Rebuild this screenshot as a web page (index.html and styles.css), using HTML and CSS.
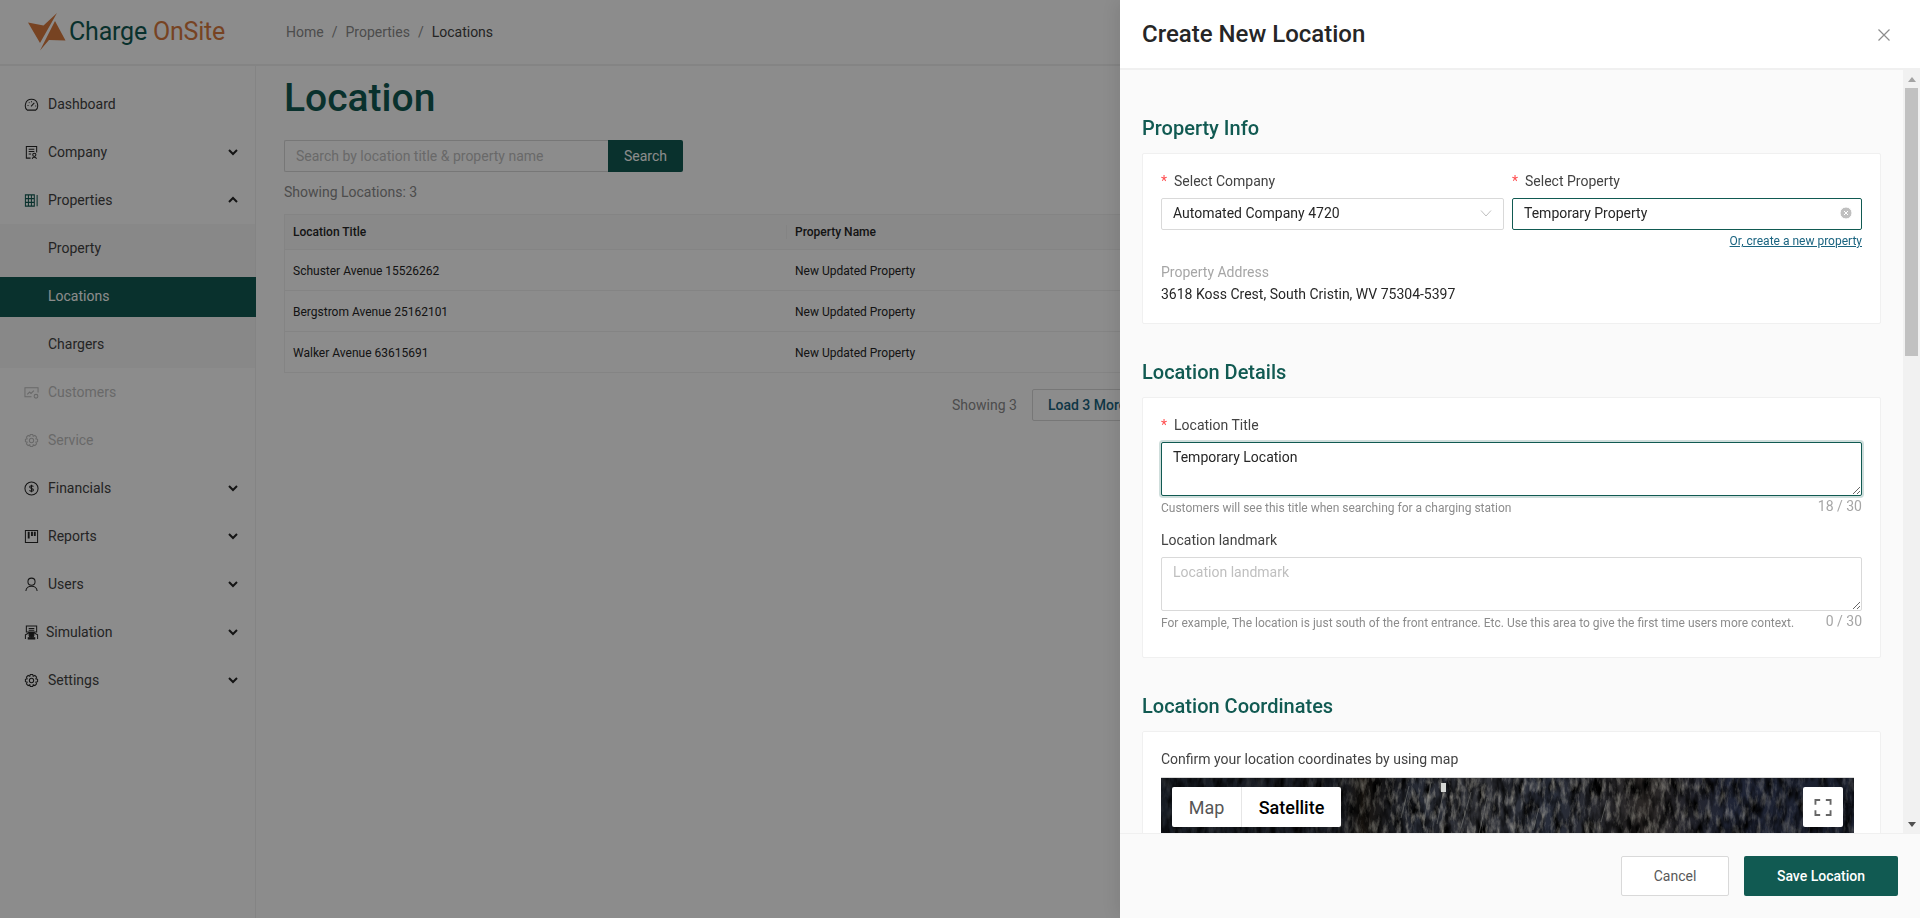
FILE: index.html
```html
<!DOCTYPE html>
<html lang="en">
<head>
    <meta charset="UTF-8">
    <meta name="viewport" content="width=device-width, initial-scale=1.0">
    <title>Create New Location - Charge OnSite</title>
    <link rel="stylesheet" href="styles.css">
</head>
<body>

<!-- Top bar -->
<header class="topbar">
    <div class="logo">
        <svg class="logo-mark" viewBox="0 0 38 38" width="38" height="38">
            <path d="M0 9.5 L15.5 12.5 L29 0 L12 30 Z" fill="#d97b3f"/>
            <path d="M27 8 L37.5 27.5 L21 27 L12 37.5 Z" fill="#d97b3f"/>
        </svg>
        <span class="logo-text">Charge <span class="logo-accent">OnSite</span></span>
    </div>
    <nav class="breadcrumb">
        <span>Home</span><i>/</i><span>Properties</span><i>/</i><span class="current">Locations</span>
    </nav>
</header>

<div class="layout">
    <!-- Sidebar -->
    <aside class="sidebar">
        <div class="menu-item">
            <svg class="menu-icon" viewBox="0 0 16 16"><path d="M3.5 14 C0 11.5 0.6 2.5 8 2.5 C15.4 2.5 16 11.5 12.5 14 Z"/><path d="M7.5 10 L11 6.2 M3.8 9 H4.8 M5.2 5.8 L5.8 6.4 M8 4.6 V5.6 M12 9.5 H13"/></svg>
            <span>Dashboard</span>
        </div>
        <div class="menu-item">
            <svg class="menu-icon" viewBox="0 0 16 16"><path d="M7 14 H2.5 V1.5 H13.5 V8 M5 4.5 H11 M5 7 H11 M5 9.5 H7.5"/><circle cx="11" cy="10.5" r="1.7"/><path d="M8.8 14.8 C9 12.6 13 12.6 13.3 14.8"/></svg>
            <span>Company</span>
            <svg class="chevron" viewBox="0 0 12 12"><path d="M2 4 L6 8 L10 4"/></svg>
        </div>
        <div class="menu-item">
            <svg class="menu-icon teal" viewBox="0 0 16 16"><path d="M1.5 2 H11 V14 H1.5 Z M1.5 6 H11 M1.5 10 H11 M4.7 2 V14 M7.9 2 V14 M14 2 V14"/></svg>
            <span>Properties</span>
            <svg class="chevron" viewBox="0 0 12 12"><path d="M2 8 L6 4 L10 8"/></svg>
        </div>
        <div class="submenu">
            <div class="menu-item">Property</div>
            <div class="menu-item active">Locations</div>
            <div class="menu-item">Chargers</div>
        </div>
        <div class="menu-item disabled">
            <svg class="menu-icon" viewBox="0 0 16 16"><path d="M8 12.5 H1 V3 H15 V8 M3.5 10 L6 7.5 L7.5 9 L10.5 6"/><circle cx="12.8" cy="12" r="2"/></svg>
            <span>Customers</span>
        </div>
        <div class="menu-item disabled">
            <svg class="menu-icon" viewBox="0 0 16 16"><circle cx="8" cy="8" r="2.3"/><path d="M6.7 1.5 H9.3 L9.8 3.4 L11.6 2.6 L13.4 4.4 L12.6 6.2 L14.5 6.7 V9.3 L12.6 9.8 L13.4 11.6 L11.6 13.4 L9.8 12.6 L9.3 14.5 H6.7 L6.2 12.6 L4.4 13.4 L2.6 11.6 L3.4 9.8 L1.5 9.3 V6.7 L3.4 6.2 L2.6 4.4 L4.4 2.6 L6.2 3.4 Z"/></svg>
            <span>Service</span>
        </div>
        <div class="menu-item">
            <svg class="menu-icon" viewBox="0 0 16 16"><circle cx="8" cy="8" r="7"/><path d="M10 6 C9.5 4.8 6 4.8 6 6.4 C6 8.3 10.1 7.6 10.1 9.6 C10.1 11.2 6.5 11.2 5.9 9.9 M8 4 V12"/></svg>
            <span>Financials</span>
            <svg class="chevron" viewBox="0 0 12 12"><path d="M2 4 L6 8 L10 4"/></svg>
        </div>
        <div class="menu-item">
            <svg class="menu-icon" viewBox="0 0 16 16"><path d="M1.5 1.5 H14.5 V14.5 H1.5 Z"/><path class="thick" d="M5 3 V10 M8.5 3 V7.5 M11.5 3 V7.5"/></svg>
            <span>Reports</span>
            <svg class="chevron" viewBox="0 0 12 12"><path d="M2 4 L6 8 L10 4"/></svg>
        </div>
        <div class="menu-item">
            <svg class="menu-icon" viewBox="0 0 16 16"><circle cx="8" cy="5" r="3.8"/><path d="M2 15 C2.3 8 13.7 8 14 15"/></svg>
            <span>Users</span>
            <svg class="chevron" viewBox="0 0 12 12"><path d="M2 4 L6 8 L10 4"/></svg>
        </div>
        <div class="menu-item sim">
            <svg class="menu-icon" viewBox="0 0 16 16"><path d="M2.5 1 H13.5 V7.5 H2.5 Z M5 3.8 H11 M5 5.5 H11 M1.5 15 V10.5 L5 8.5 H11 L14.5 10.5 V15"/><circle cx="8" cy="10.5" r="2.6" fill="#262626"/><path d="M4.5 13.5 H11.5 V15 H4.5 Z" fill="#262626"/></svg>
            <span>Simulation</span>
            <svg class="chevron" viewBox="0 0 12 12"><path d="M2 4 L6 8 L10 4"/></svg>
        </div>
        <div class="menu-item">
            <svg class="menu-icon" viewBox="0 0 16 16"><circle cx="8" cy="8" r="2.3"/><path d="M6.7 1.5 H9.3 L9.8 3.4 L11.6 2.6 L13.4 4.4 L12.6 6.2 L14.5 6.7 V9.3 L12.6 9.8 L13.4 11.6 L11.6 13.4 L9.8 12.6 L9.3 14.5 H6.7 L6.2 12.6 L4.4 13.4 L2.6 11.6 L3.4 9.8 L1.5 9.3 V6.7 L3.4 6.2 L2.6 4.4 L4.4 2.6 L6.2 3.4 Z"/></svg>
            <span>Settings</span>
            <svg class="chevron" viewBox="0 0 12 12"><path d="M2 4 L6 8 L10 4"/></svg>
        </div>
    </aside>

    <!-- Location list -->
    <main class="content">
        <h1>Location</h1>
        <div class="search">
            <input type="text" placeholder="Search by location title &amp; property name">
            <button class="search-btn">Search</button>
        </div>
        <p class="count">Showing Locations: 3</p>
        <div class="table">
            <div class="row head"><div class="cell first">Location Title</div><div class="cell">Property Name</div></div>
            <div class="row"><div class="cell first">Schuster Avenue 15526262</div><div class="cell">New Updated Property</div></div>
            <div class="row"><div class="cell first">Bergstrom Avenue 25162101</div><div class="cell">New Updated Property</div></div>
            <div class="row"><div class="cell first">Walker Avenue 63615691</div><div class="cell">New Updated Property</div></div>
        </div>
        <div class="load-more">
            <span>Showing 3</span>
            <button class="load-btn">Load 3 More</button>
        </div>
    </main>
</div>

<!-- Dim layer and drawer -->
<div class="overlay"></div>

<section class="drawer">
    <div class="drawer-head">
        <h2>Create New Location</h2>
        <svg class="close" viewBox="0 0 12 12" width="12" height="12"><path d="M0.5 0.5 L11.5 11.5 M11.5 0.5 L0.5 11.5"/></svg>
    </div>

    <div class="drawer-main">
        <div class="drawer-body">
            <h3>Property Info</h3>
            <div class="card">
                <div class="two-col">
                    <div class="field">
                        <label class="field-label"><b>*</b>Select Company</label>
                        <div class="select">
                            <span>Automated Company 4720</span>
                            <svg viewBox="0 0 12 12" width="12" height="12"><path d="M1 3.5 L6 9 L11 3.5"/></svg>
                        </div>
                    </div>
                    <div class="field">
                        <label class="field-label"><b>*</b>Select Property</label>
                        <div class="select focused">
                            <span>Temporary Property</span>
                            <svg class="clear" viewBox="0 0 12 12" width="12" height="12"><circle cx="6" cy="6" r="6"/><path d="M4 4 L8 8 M8 4 L4 8"/></svg>
                        </div>
                        <a class="new-link">Or, create a new property</a>
                    </div>
                </div>
                <div class="address-label">Property Address</div>
                <div class="address">3618 Koss Crest, South Cristin, WV 75304-5397</div>
            </div>

            <h3>Location Details</h3>
            <div class="card details">
                <label class="field-label"><b>*</b>Location Title</label>
                <textarea class="area focused">Temporary Location</textarea>
                <div class="help"><span>Customers will see this title when searching for a charging station</span><em>18 / 30</em></div>
                <label class="field-label plain">Location landmark</label>
                <textarea class="area" placeholder="Location landmark"></textarea>
                <div class="help"><span>For example, The location is just south of the front entrance. Etc. Use this area to give the first time users more context.</span><em>0 / 30</em></div>
            </div>

            <h3>Location Coordinates</h3>
            <div class="card coords">
                <div class="confirm">Confirm your location coordinates by using map</div>
                <div class="map">
                    <svg class="map-bg" width="693" height="450">
                        <defs>
                            <linearGradient id="ground">
                                <stop offset="0" stop-color="#171c24"/>
                                <stop offset="0.26" stop-color="#1a1d24"/>
                                <stop offset="0.29" stop-color="#17130f"/>
                                <stop offset="0.33" stop-color="#1b1c20"/>
                                <stop offset="0.37" stop-color="#272b35"/>
                                <stop offset="0.46" stop-color="#34353a"/>
                                <stop offset="0.56" stop-color="#282d3a"/>
                                <stop offset="0.7" stop-color="#2a2624"/>
                                <stop offset="0.82" stop-color="#202536"/>
                                <stop offset="1" stop-color="#191e2c"/>
                            </linearGradient>
                            <linearGradient id="fade">
                                <stop offset="0.2" stop-color="#333333"/>
                                <stop offset="0.36" stop-color="#ffffff"/>
                                <stop offset="0.72" stop-color="#cccccc"/>
                                <stop offset="1" stop-color="#777777"/>
                            </linearGradient>
                            <mask id="rock-mask"><rect width="693" height="450" fill="url(#fade)"/></mask>
                            <filter id="rock">
                                <feTurbulence type="fractalNoise" baseFrequency="0.2 0.07" numOctaves="4" seed="8"/>
                                <feColorMatrix values="0 0 0 0 0.5  0 0 0 0 0.48  0 0 0 0 0.42  1.5 0 0 0 -0.68"/>
                            </filter>
                            <filter id="shade">
                                <feTurbulence type="fractalNoise" baseFrequency="0.12 0.05" numOctaves="3" seed="21"/>
                                <feColorMatrix values="0 0 0 0 0  0 0 0 0 0  0 0 0 0 0  0 2.2 0 0 -0.8"/>
                            </filter>
                        </defs>
                        <rect width="693" height="450" fill="url(#ground)"/>
                        <rect width="693" height="450" filter="url(#shade)"/>
                        <g mask="url(#rock-mask)"><rect width="693" height="450" filter="url(#rock)"/></g>
                        <path class="streak" d="M240 40 L248 8 M262 50 L270 4 M276 46 L282 16 M300 50 L310 14 M318 56 L326 20 M372 52 L378 30 M440 44 L446 22"/>
                        <rect x="280" y="5" width="5" height="9" fill="#d6d8d4"/>
                    </svg>
                    <div class="map-type">
                        <span class="map-opt">Map</span>
                        <span class="map-opt on">Satellite</span>
                    </div>
                    <div class="map-full">
                        <svg viewBox="0 0 18 18" width="18" height="17"><path d="M1 6 V1 H6 M12 1 H17 V6 M17 12 V17 H12 M6 17 H1 V12"/></svg>
                    </div>
                </div>
            </div>
        </div>

        <!-- Scrollbar of the drawer body -->
        <div class="scrollbar">
            <div class="scroll-btn"><span class="arrow-up"></span></div>
            <div class="scroll-track"><div class="scroll-thumb"></div></div>
            <div class="scroll-btn"><span class="arrow-down"></span></div>
        </div>
    </div>

    <div class="drawer-foot">
        <button class="btn-cancel">Cancel</button>
        <button class="btn-save">Save Location</button>
    </div>
</section>

</body>
</html>
```
FILE: styles.css
```css
* {
    box-sizing: border-box;
}

html, body {
    height: 100%;
}

body {
    font-family: 'Roboto', sans-serif;
    margin: 0;
    background-color: #ffffff;
    color: #262626;
    font-size: 14px;
    overflow: hidden;
}

/* Top bar */
.topbar {
    height: 66px;
    display: flex;
    align-items: center;
    border-bottom: 2px solid #f0f0f0;
}

.logo {
    width: 286px;
    padding-left: 28px;
    display: flex;
    align-items: center;
    gap: 3px;
}

.logo-text {
    font-size: 25px;
    color: #115a52;
    letter-spacing: -0.2px;
    padding-bottom: 2px;
}

.logo-accent {
    color: #d97b3f;
}

.breadcrumb {
    display: flex;
    gap: 8px;
    color: #8c8c8c;
}

.breadcrumb i {
    font-style: normal;
}

.breadcrumb .current {
    color: #434343;
}

/* Sidebar */
.layout {
    display: flex;
    height: calc(100% - 66px);
}

.sidebar {
    width: 256px;
    flex: none;
    padding-top: 18px;
    border-right: 1px solid #f0f0f0;
}

.menu-item {
    height: 40px;
    margin-bottom: 8px;
    padding: 0 16px 0 24px;
    display: flex;
    align-items: center;
    gap: 9px;
    color: #434343;
}

.menu-icon {
    width: 15px;
    height: 15px;
    flex: none;
    fill: none;
    stroke: #262626;
    stroke-width: 1.1;
}

.menu-icon.teal {
    stroke: #115a52;
}

.menu-icon .thick {
    stroke-width: 2;
}

.sim {
    gap: 7px;
}

.chevron {
    width: 12px;
    height: 12px;
    margin-left: auto;
    fill: none;
    stroke: #262626;
    stroke-width: 2;
}

.submenu {
    background-color: #f7f7f7;
    padding: 4px 0;
    margin-top: -4px;
    margin-bottom: 4px;
}

.submenu .menu-item {
    padding-left: 48px;
}

.submenu .menu-item:first-child {
    margin-bottom: 9px;
}

.submenu .menu-item:last-child {
    margin-bottom: 0;
}

.submenu .active {
    margin: 0 -1px 7px 0;
    padding-bottom: 2px;
    background-color: #115a52;
    color: #ffffff;
}

.disabled {
    color: #bfbfbf;
}

.disabled .menu-icon {
    stroke: #bfbfbf;
}

/* Location list */
.content {
    flex: 1;
    padding: 0 0 0 28px;
}

h1 {
    margin: 6px 0 16px;
    font-size: 39px;
    line-height: 52px;
    font-weight: 500;
    color: #115a52;
}

.search {
    display: flex;
}

.search input {
    width: 324px;
    height: 32px;
    padding: 0 11px;
    border: 1px solid #d9d9d9;
    border-right: none;
    border-radius: 2px 0 0 2px;
    font-family: inherit;
    font-size: 14px;
}

.search input::placeholder {
    color: #bfbfbf;
}

.search-btn {
    width: 75px;
    height: 32px;
    border: none;
    border-radius: 0 2px 2px 0;
    background-color: #115a52;
    color: #ffffff;
    font-family: inherit;
    font-size: 14px;
}

.count {
    margin: 10px 0 12px;
    line-height: 20px;
    color: #8c8c8c;
}

.table {
    border: 1px solid #f0f0f0;
    border-bottom: none;
    font-size: 12px;
}

.row {
    display: flex;
    height: 41px;
    padding-top: 1px;
    align-items: center;
    border-bottom: 1px solid #f0f0f0;
}

.row.head {
    height: 35px;
    padding-top: 0;
    background-color: #fafafa;
    font-weight: 500;
}

.cell {
    padding-left: 8px;
}

.cell.first {
    width: 502px;
    flex: none;
}

.row.head .cell.first {
    border-right: 1px solid #f0f0f0;
}

.load-more {
    margin: 16px 0 0 668px;
    display: flex;
    align-items: center;
    gap: 15px;
    color: #8c8c8c;
    white-space: nowrap;
}

.load-btn {
    height: 32px;
    padding: 0 15px;
    border: 1px solid #d9d9d9;
    border-radius: 2px;
    background-color: #ffffff;
    color: #1a6480;
    font-family: inherit;
    font-size: 14px;
    font-weight: 500;
}

/* Dim layer */
.overlay {
    position: fixed;
    top: 0;
    left: 0;
    width: 100%;
    height: 100%;
    background-color: rgba(0, 0, 0, 0.45);
}

/* Drawer */
.drawer {
    position: fixed;
    top: 0;
    right: 0;
    width: 800px;
    height: 100%;
    display: flex;
    flex-direction: column;
    background-color: #fafafa;
    box-shadow: -6px 0 16px rgba(0, 0, 0, 0.08);
}

.drawer-head {
    height: 70px;
    flex: none;
    padding: 0 30px 0 22px;
    display: flex;
    align-items: center;
    justify-content: space-between;
    background-color: #ffffff;
    border-bottom: 2px solid #f0f0f0;
}

.drawer-head h2 {
    margin: 0;
    font-size: 24px;
    font-weight: 500;
    color: #262626;
}

.close {
    fill: none;
    stroke: #8c8c8c;
    stroke-width: 1.2;
    margin-top: 2px;
}

.drawer-main {
    flex: 1;
    min-height: 0;
    display: flex;
}

.drawer-body {
    flex: 1;
    min-width: 0;
    overflow: hidden;
    padding: 0 22px;
}

.scrollbar {
    width: 17px;
    flex: none;
    display: flex;
    flex-direction: column;
    background-color: #f1f1f1;
}

.scroll-btn {
    height: 18px;
    display: flex;
    align-items: center;
    justify-content: center;
}

.arrow-up, .arrow-down {
    width: 0;
    height: 0;
    border-left: 4.5px solid transparent;
    border-right: 4.5px solid transparent;
}

.arrow-up {
    border-bottom: 5px solid #a3a3a3;
}

.arrow-down {
    border-top: 5px solid #505050;
}

.scroll-track {
    flex: 1;
    padding: 0 2px;
}

.scroll-thumb {
    height: 268px;
    background-color: #c1c1c1;
}

h3 {
    margin: 46px 0 13px;
    font-size: 20px;
    line-height: 24px;
    font-weight: 500;
    color: #115a52;
}

.card + h3 {
    margin-top: 36px;
}

.card {
    background-color: #ffffff;
    border: 1px solid #f0f0f0;
    border-radius: 2px;
    padding: 16px 18px 0;
}

.two-col {
    display: grid;
    grid-template-columns: 343px 1fr;
    gap: 8px;
}

.field {
    display: flex;
    flex-direction: column;
}

.field-label {
    display: block;
    line-height: 22px;
    color: #434343;
    margin-bottom: 6px;
}

.field-label b {
    color: #ff4d4f;
    font-weight: 400;
    margin-right: 7px;
}

.select {
    height: 32px;
    padding: 0 11px 2px;
    display: flex;
    align-items: center;
    justify-content: space-between;
    border: 1px solid #d9d9d9;
    border-radius: 2px;
    color: #262626;
}

.select svg {
    fill: none;
    stroke: #bfbfbf;
}

.select .clear {
    fill: #bfbfbf;
    stroke: #ffffff;
    margin-right: -2px;
}

.select.focused {
    border-color: #115a52;
}

.new-link {
    align-self: flex-end;
    margin-top: 3px;
    font-size: 12px;
    line-height: 16px;
    color: #1a6480;
    text-decoration: underline;
}

.address-label {
    margin-top: 13px;
    line-height: 20px;
    color: #a6a6a6;
}

.address {
    margin-top: 2px;
    padding-bottom: 19px;
    line-height: 20px;
    color: #262626;
}

.area {
    display: block;
    width: 100%;
    height: 54px;
    padding: 3px 11px;
    border: 1px solid #d9d9d9;
    border-radius: 2px;
    font-family: inherit;
    font-size: 14px;
    line-height: 22px;
    color: #262626;
    outline: none;
}

.area::placeholder {
    color: #bfbfbf;
}

.area.focused {
    border-color: #115a52;
    box-shadow: 0 0 0 2px rgba(17, 90, 82, 0.2);
}

.help {
    display: flex;
    justify-content: space-between;
    font-size: 12px;
    line-height: 20px;
    color: #8c8c8c;
    height: 20px;
    margin-top: 2px;
}

.help em {
    font-style: normal;
    font-size: 14px;
    margin-top: -2px;
    color: #a6a6a6;
}

.field-label.plain {
    margin-top: 11px;
}

.details {
    padding-bottom: 24px;
}

.confirm {
    line-height: 20px;
    margin: 1px 0 8px;
    color: #434343;
}

.map {
    position: relative;
    width: 693px;
    height: 450px;
    overflow: hidden;
    border-top: 1px solid #d9d9d9;
}

.map-bg {
    display: block;
}

.streak {
    fill: none;
    stroke: #8e918c;
    stroke-width: 1;
    opacity: 0.45;
}

.map-type {
    position: absolute;
    top: 9px;
    left: 11px;
    height: 40px;
    display: flex;
    background-color: #ffffff;
    border-radius: 2px;
    font-size: 18px;
}

.map-opt {
    width: 69px;
    display: flex;
    align-items: center;
    justify-content: center;
    color: #565656;
}

.map-opt.on {
    width: 100px;
    color: #000000;
    font-weight: 500;
    border-left: 1px solid #e6e6e6;
}

.map-full {
    position: absolute;
    top: 9px;
    right: 11px;
    width: 40px;
    height: 40px;
    display: flex;
    align-items: center;
    justify-content: center;
    background-color: #ffffff;
    border-radius: 2px;
}

.map-full svg {
    fill: none;
    stroke: #666666;
    stroke-width: 2;
}

/* Drawer footer */
.drawer-foot {
    height: 85px;
    flex: none;
    padding: 22px 22px 0 0;
    display: flex;
    justify-content: flex-end;
    gap: 15px;
    background-color: #fafafa;
    border-top: 1px solid #f0f0f0;
}

.btn-cancel, .btn-save {
    height: 40px;
    border-radius: 2px;
    font-family: inherit;
    font-size: 14px;
}

.btn-cancel {
    width: 108px;
    border: 1px solid #d9d9d9;
    background-color: #ffffff;
    color: #595959;
}

.btn-save {
    width: 154px;
    border: none;
    background-color: #115a52;
    color: #ffffff;
    font-weight: 500;
}
```
